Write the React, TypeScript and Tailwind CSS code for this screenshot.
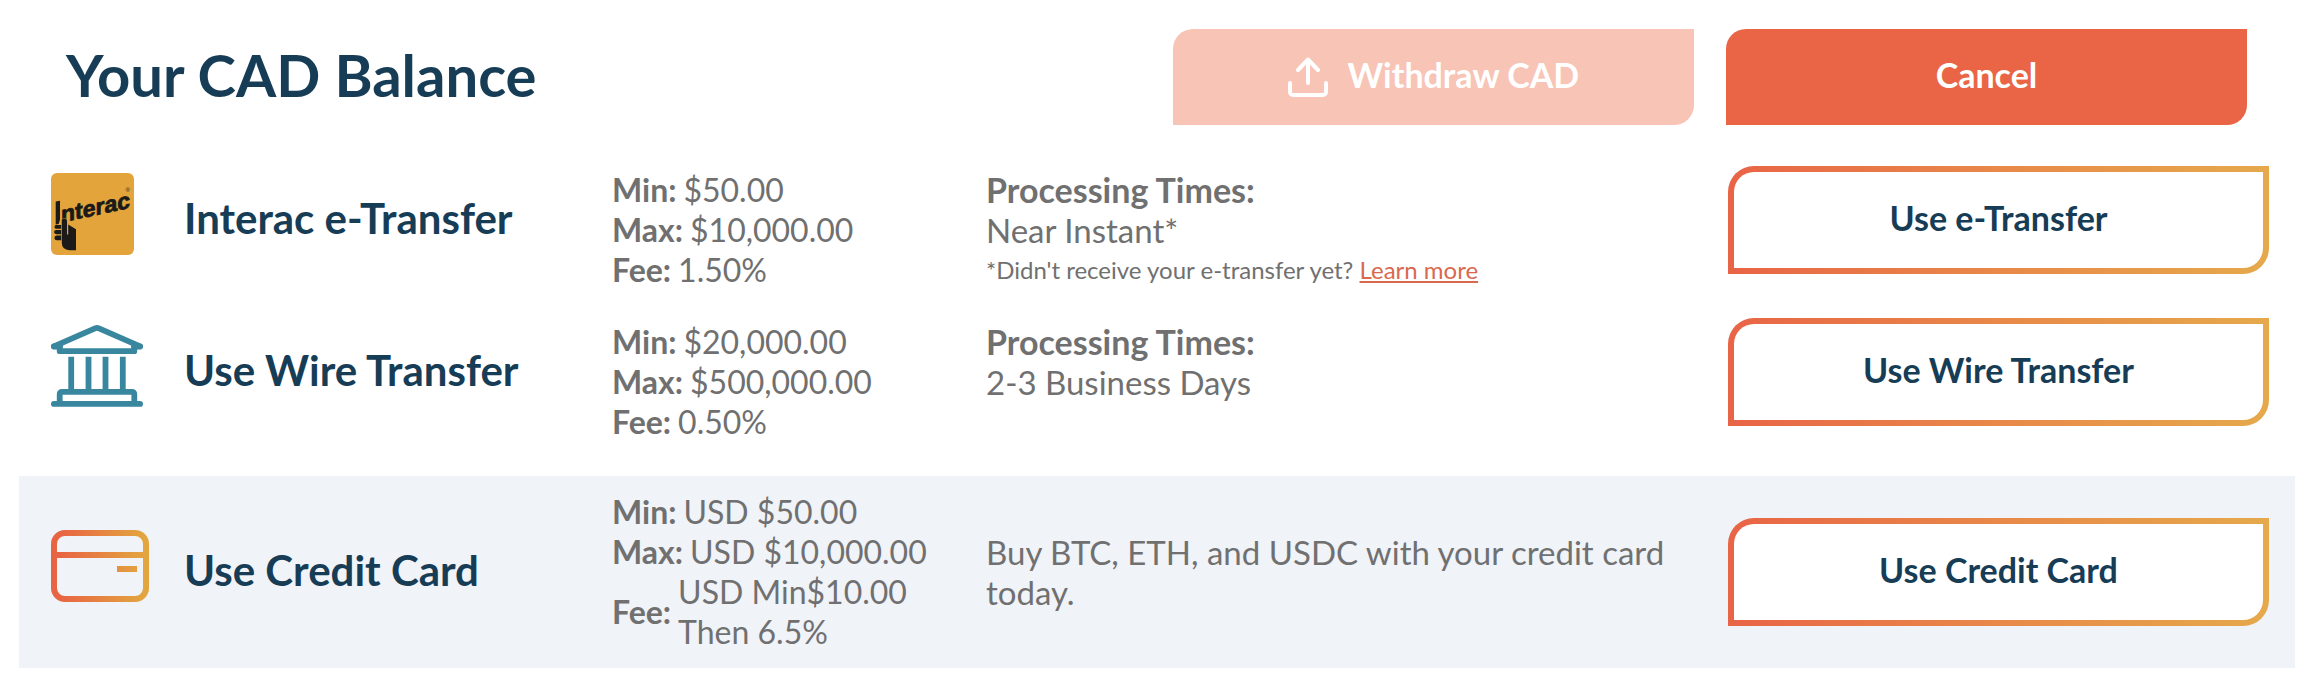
import type { ReactNode } from "react";

function UploadIcon() {
  return (
    <svg viewBox="0 0 40 40" className="size-10 shrink-0" fill="none" stroke="currentColor" strokeWidth="4" strokeLinecap="round" strokeLinejoin="round" aria-hidden="true">
      <path d="M20 26V3M10 13L20 2.5L30 13" />
      <path d="M2 26v9a3 3 0 0 0 3 3h30a3 3 0 0 0 3-3v-9" />
    </svg>
  );
}

function InteracLogo() {
  return (
    <svg viewBox="0 0 83 82" className="h-[82px] w-[83px]" role="img" aria-label="Interac">
      <rect width="83" height="82" rx="6" fill="#e3a53b" />
      <g fill="#1b1a18">
        <path d="M4.7 28.6L9 27.8V46.5Q8.4 49 7.6 51L4.7 51.4Z" />
        <text transform="translate(10 49.5) skewY(-12)" fontFamily="'Liberation Sans', sans-serif" fontWeight="700" fontSize="23" stroke="#1b1a18" strokeWidth="0.8">
          nterac
        </text>
        <text x="74.5" y="19" fontFamily="'Liberation Sans', sans-serif" fontSize="6">
          ®
        </text>
        <path d="M5.5 52h5v3.8H5.2a1.9 1.9 0 0 1 .3-3.8ZM5.2 57h5.3v4.2H5.2a2.1 2.1 0 0 1 0-4.2ZM5.5 62.6h5v4.6H6a2.3 2.3 0 0 1-.5-4.6Z" />
        <path d="M10.8 48.6a2.6 2.6 0 0 1 5.2-.8V61.5h1.2V51.6L25 56.2V77.3H18.5Q10.8 76.8 10.8 69.5Z" stroke="#e3a53b" strokeWidth="1" paintOrder="stroke" />
      </g>
    </svg>
  );
}

function BankIcon() {
  return (
    <svg viewBox="0 0 92 82" className="h-[82px] w-[92px]" fill="none" stroke="#39869f" strokeWidth="5.8" strokeLinejoin="round" aria-hidden="true">
      <path d="M2.9 21.3L44.6 3.2Q46 2.7 47.4 3.2L89.1 21.3" strokeLinecap="round" />
      <path d="M2.9 21.5H9M83 21.5H89" strokeLinecap="round" />
      <path d="M8.7 21V26.2H83.3V21" />
      <path d="M20.2 31.7V66M37.5 31.7V66M54.5 31.7V66M71.8 31.7V66" />
      <path d="M8.7 78V69.5Q8.7 66.9 11.3 66.9H80.7Q83.3 66.9 83.3 69.5V78" />
      <path d="M2.9 78.9H89.1" strokeLinecap="round" />
    </svg>
  );
}

function CardIcon() {
  return (
    <svg viewBox="0 0 98 72" className="h-[72px] w-[98px]" fill="none" stroke="url(#card-gradient)" strokeWidth="6" aria-hidden="true">
      <defs>
        <linearGradient id="card-gradient" gradientUnits="userSpaceOnUse" x1="0" y1="0" x2="98" y2="0">
          <stop offset="0.1" stopColor="#e86544" />
          <stop offset="0.95" stopColor="#e3a53f" />
        </linearGradient>
      </defs>
      <rect x="3" y="3" width="92" height="66" rx="11" />
      <path d="M3 25H95M66 39H86" />
    </svg>
  );
}

function Limit({ label, children }: { label: string; children: ReactNode }) {
  return (
    <div className="flex items-center gap-[7px]">
      <dt className="font-bold">{label}</dt>
      <dd>{children}</dd>
    </div>
  );
}

interface MethodProps {
  icon: ReactNode;
  name: string;
  min: string;
  max: string;
  fee: ReactNode;
  action: string;
  highlighted?: boolean;
  children: ReactNode;
}

function Method({ icon, name, min, max, fee, action, highlighted, children }: MethodProps) {
  return (
    <li
      className={
        "grid grid-cols-[133px_428fr_374fr_742fr_541fr] items-center pl-8 pr-[26px] " +
        (highlighted ? "mt-[22px] bg-[#f0f3f8] py-4" : "")
      }
    >
      <div className="pb-3">{icon}</div>
      <h2 className="pb-1 text-[42px] leading-12 font-bold text-[#173d56]">{name}</h2>
      <dl className={highlighted ? "" : "pt-5"}>
        <Limit label="Min:">{min}</Limit>
        <Limit label="Max:">{max}</Limit>
        <Limit label="Fee:">{fee}</Limit>
      </dl>
      <div className={highlighted ? "pr-12 text-[33px]" : "self-start pt-5 pr-12 text-[33px]"}>{children}</div>
      <div className="rounded-tl-[26px] rounded-br-[26px] bg-linear-to-r from-[#e86446] to-[#e5a94b] p-[6px]">
        <button type="button" className="block h-24 w-full rounded-tl-[20px] rounded-br-[20px] bg-white pb-1 text-[34px] font-bold text-[#173d56]">
          {action}
        </button>
      </div>
    </li>
  );
}

export default function App() {
  return (
    <main className="bg-white pb-4 font-['Lato',sans-serif] text-[32px] leading-10 text-[#707070]">
      <header className="flex items-center justify-between pt-[29px] pr-[66px] pl-[66px]">
        <h1 className="pb-1 text-[58px] leading-16 font-bold text-[#173d56]">Your CAD Balance</h1>
        <div className="grid w-[49.25%] grid-cols-2 gap-8 text-[34px] text-white">
          <button type="button" disabled className="flex h-24 items-center justify-center gap-5 rounded-tl-[20px] rounded-br-[20px] bg-[#f8c4b6] font-bold">
            <UploadIcon />
            <span className="pb-1">Withdraw CAD</span>
          </button>
          <button type="button" className="h-24 rounded-tl-[20px] rounded-br-[20px] bg-[#e96545] pb-1 font-bold">
            Cancel
          </button>
        </div>
      </header>
      <ul className="mt-[25px] mr-[18px] ml-[19px] flex flex-col gap-3">
        <Method icon={<InteracLogo />} name="Interac e-Transfer" min="$50.00" max="$10,000.00" fee="1.50%" action="Use e-Transfer">
          <p className="text-[34px] leading-10 font-bold">Processing Times:</p>
          <p>Near Instant*</p>
          <p className="text-[24px] leading-10">
            *Didn't receive your e-transfer yet?{" "}
            <a href="#learn-more" className="text-[#d9694e] underline">
              Learn more
            </a>
          </p>
        </Method>
        <Method icon={<BankIcon />} name="Use Wire Transfer" min="$20,000.00" max="$500,000.00" fee="0.50%" action="Use Wire Transfer">
          <p className="text-[34px] leading-10 font-bold">Processing Times:</p>
          <p>2-3 Business Days</p>
        </Method>
        <Method
          icon={<CardIcon />}
          name="Use Credit Card"
          min="USD $50.00"
          max="USD $10,000.00"
          fee={
            <>
              USD Min$10.00
              <br />
              Then 6.5%
            </>
          }
          action="Use Credit Card"
          highlighted
        >
          <p>Buy BTC, ETH, and USDC with your credit card today.</p>
        </Method>
      </ul>
    </main>
  );
}
